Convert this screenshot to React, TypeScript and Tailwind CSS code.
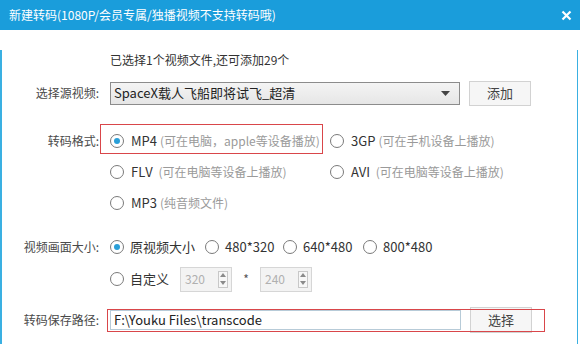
import React from 'react'

const font = { fontFamily: '"Microsoft YaHei", "Noto Sans CJK SC", "Noto Sans", sans-serif' }

function Radio({ checked = false }: { checked?: boolean }) {
  return (
    <span className="w-[14px] h-[14px] rounded-full border border-[#7a7a7a] bg-white flex items-center justify-center shrink-0">
      {checked && <span className="w-[6px] h-[6px] rounded-full bg-[#2a9fd8]" />}
    </span>
  )
}

function Spin({ value }: { value: string }) {
  return (
    <div className="w-[52px] h-[25px] border border-[#d6d6d6] bg-[#f3f3f3] flex items-center justify-between pl-[4px] pr-[3px]">
      <span className="text-[12px] text-[#b0b0b0]">{value}</span>
      <div className="w-[10px] h-[17px] border border-[#c8c8c8] bg-[#f7f7f7] flex flex-col items-center justify-around">
        <svg width="6" height="4" viewBox="0 0 6 4"><path d="M0 4 L3 0 L6 4 Z" fill="#8a8a8a" /></svg>
        <svg width="6" height="4" viewBox="0 0 6 4"><path d="M0 0 L3 4 L6 0 Z" fill="#8a8a8a" /></svg>
      </div>
    </div>
  )
}

function Label({ text }: { text: string }) {
  return <div className="w-[98px] text-right text-[12px] text-[#4a4a4a] shrink-0 pr-[1px]">{text}</div>
}

export default function App() {
  const formats = [
    [
      { name: 'MP4', hint: '(可在电脑，apple等设备播放)', checked: true },
      { name: '3GP', hint: '(可在手机设备上播放)' },
    ],
    [
      { name: 'FLV', hint: ' (可在电脑等设备上播放)' },
      { name: 'AVI', hint: ' (可在电脑等设备上播放)' },
    ],
    [{ name: 'MP3', hint: '(纯音频文件)' }],
  ]

  const sizes = [
    { text: '原视频大小', w: 'w-[95px]', checked: true },
    { text: '480*320', w: 'w-[78px]' },
    { text: '640*480', w: 'w-[80px]' },
    { text: '800*480', w: 'w-[80px]' },
  ]

  return (
    <div className="w-[580px] h-[344px] overflow-hidden bg-white" style={font}>
      <div className="h-[30px] bg-[#1a9ddb] flex items-center justify-between pl-[9px] pr-[8px]">
        <span className="text-[12px] text-white">新建转码(1080P/会员专属/独播视频不支持转码哦)</span>
        <svg width="11" height="11" viewBox="0 0 11 11">
          <path d="M1.5 1.5 L9.5 9.5 M9.5 1.5 L1.5 9.5" stroke="white" strokeWidth="2.2" />
        </svg>
      </div>

      <div className="w-[578px] h-[314px] border-l-2 border-r border-[#3ab0e2]">
        <div className="h-[20px] mt-[20px] flex items-center pl-[108px] text-[12px] text-[#333]">
          已选择1个视频文件,还可添加29个
        </div>

        <div className="h-[26px] mt-[10px] flex items-center">
          <Label text="选择源视频:" />
          <div className="ml-[10px] w-[350px] h-[23px] border border-[#8c8c8c] bg-gradient-to-b from-[#f4f4f4] to-[#e6e6e6] flex items-center justify-between pl-[3px] pr-[9px]">
            <span className="text-[13px] text-[#222]">SpaceX载人飞船即将试飞_超清</span>
            <svg width="9" height="5" viewBox="0 0 9 5"><path d="M0 0 L9 0 L4.5 5 Z" fill="#444" /></svg>
          </div>
          <button className="ml-[9px] w-[62px] h-[25px] border border-[#d2d2d2] bg-[#f6f6f6] text-[13px] text-[#444]">添加</button>
        </div>

        <div className="mt-[19px]">
          {formats.map((row, i) => (
            <div key={i} className="relative h-[31px] flex items-center">
              {i === 0 ? <Label text="转码格式:" /> : <div className="w-[98px] shrink-0" />}
              <div className="ml-[10px] flex items-center">
                {row.map((f, j) => (
                  <div key={j} className={`flex items-center ${j === 0 ? 'w-[220px]' : ''}`}>
                    <Radio checked={f.checked} />
                    <span className="ml-[7px] text-[13px] text-[#333]">{f.name}</span>
                    <span className="ml-[3px] text-[12px] text-[#9a9a9a] whitespace-pre">{f.hint}</span>
                  </div>
                ))}
              </div>
              {i === 0 && <div className="absolute left-[98px] top-[-1px] w-[223px] h-[30px] border border-[#d9464a]" />}
            </div>
          ))}
        </div>

        <div className="h-[30px] mt-[14px] flex items-center">
          <Label text="视频画面大小:" />
          <div className="ml-[10px] flex items-center">
            {sizes.map((s, i) => (
              <div key={i} className={`flex items-center ${s.w}`}>
                <Radio checked={s.checked} />
                <span className="ml-[6px] text-[13px] text-[#333]">{s.text}</span>
              </div>
            ))}
          </div>
        </div>

        <div className="h-[30px] mt-[2px] flex items-center">
          <div className="w-[98px] shrink-0" />
          <div className="ml-[10px] flex items-center">
            <Radio />
            <span className="ml-[6px] w-[50px] text-[13px] text-[#333]">自定义</span>
            <Spin value="320" />
            <span className="w-[28px] text-center text-[12px] text-[#555]">*</span>
            <Spin value="240" />
          </div>
        </div>

        <div className="relative h-[28px] mt-[12px] flex items-center">
          <Label text="转码保存路径:" />
          <div className="ml-[10px] w-[351px] h-[20px] border border-[#b7cbd8] bg-white flex items-center pl-[3px]">
            <span className="text-[13px] text-[#222]">F:\Youku Files\transcode</span>
          </div>
          <button className="ml-[9px] w-[62px] h-[26px] border border-[#d2d2d2] bg-[#f6f6f6] text-[13px] text-[#444]">选择</button>
          <div className="absolute left-[105px] top-[3px] w-[438px] h-[23px] border border-[#d9464a]" />
        </div>
      </div>
    </div>
  )
}
